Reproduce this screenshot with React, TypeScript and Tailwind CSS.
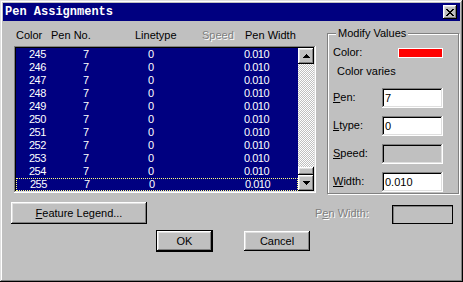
import React from "react";

const raised =
  "shadow-[inset_-1px_-1px_#000000,inset_1px_1px_#ffffff,inset_-2px_-2px_#808080,inset_2px_2px_#dfdfdf]";
const sunken =
  "shadow-[inset_-1px_-1px_#ffffff,inset_1px_1px_#808080,inset_-2px_-2px_#dfdfdf,inset_2px_2px_#000000]";

const rows = [245, 246, 247, 248, 249, 250, 251, 252, 253, 254, 255];

function UpArrow() {
  return (
    <svg width="7" height="4" viewBox="0 0 7 4">
      <path d="M3 0h1v1h1v1h1v1h1v1H0V3h1V2h1V1h1z" fill="#000" />
    </svg>
  );
}
function DownArrow() {
  return (
    <svg width="7" height="4" viewBox="0 0 7 4">
      <path d="M0 0h7v1H6v1H5v1H4v1H3V3H2V2H1V1H0z" fill="#000" />
    </svg>
  );
}

function Field({ value, disabled }: { value?: string; disabled?: boolean }) {
  return (
    <div
      className={`w-[61px] h-[20px] ${sunken} ${disabled ? "bg-[#c0c0c0]" : "bg-white"} flex items-center pl-[3px] text-[11px] text-black`}
    >
      {value}
    </div>
  );
}

export default function App() {
  return (
    <div
      className="w-[463px] h-[282px] bg-[#c0c0c0] p-[3px] shadow-[inset_-1px_-1px_#000000,inset_1px_1px_#dfdfdf,inset_-2px_-2px_#808080,inset_2px_2px_#ffffff] select-none"
      style={{ fontFamily: '"Liberation Sans", Arial, sans-serif' }}
    >
      {/* title bar */}
      <div className="h-[18px] bg-[#000080] flex items-center justify-between pl-[2px] pr-[3px]">
        <span
          className="text-white text-[12px] font-bold leading-none"
          style={{ fontFamily: '"Liberation Mono", "Courier New", monospace' }}
        >
          Pen Assignments
        </span>
        <div className={`w-[14px] h-[14px] bg-[#c0c0c0] ${raised} flex items-center justify-center`}>
          <svg width="8" height="7" viewBox="0 0 8 7">
            <path
              d="M0 0h2v1h1v1h2V1h1V0h2v1H7v1H6v1H5v1h1v1h1v1h1v1H6V6H5V5H3v1H2v1H0V6h1V5h1V4h1V3H2V2H1V1H0z"
              fill="#000"
            />
          </svg>
        </div>
      </div>

      {/* body */}
      <div className="flex flex-col text-[11px] leading-[13px] text-black">
        <div className="flex items-start">
          {/* left column */}
          <div className="ml-[11px] flex flex-col">
            <div className="relative h-[13px] mt-[8px] w-[302px]">
              <span className="absolute left-[2px] top-0">Color</span>
              <span className="absolute left-[37px] top-0">Pen No.</span>
              <span className="absolute left-[121px] top-0">Linetype</span>
              <span className="absolute left-[188px] top-0 text-[#808080] [text-shadow:1px_1px_0_#ffffff]">
                Speed
              </span>
              <span className="absolute left-[231px] top-0">Pen Width</span>
            </div>
            <div className={`mt-[4px] w-[302px] h-[147px] p-[2px] bg-[#c0c0c0] ${sunken} flex`}>
              <div className="w-[282px] h-[143px] bg-[#000080] flex flex-col text-white tracking-[-0.5px]">
                {rows.map((r, i) => (
                  <div
                    key={r}
                    className={`h-[13px] flex items-center pl-[13px] ${
                      i === rows.length - 1 ? "border border-dotted border-[#ffff7f] pl-[12px]" : ""
                    }`}
                  >
                    <span className="w-[54px]">{r}</span>
                    <span className="w-[65px]">7</span>
                    <span className="w-[96px]">0</span>
                    <span>0.010</span>
                  </div>
                ))}
              </div>
              {/* scrollbar */}
              <div className="w-[16px] h-[143px] flex flex-col bg-[repeating-conic-gradient(#c0c0c0_0%_25%,#ffffff_0%_50%)] bg-[length:2px_2px]">
                <div className={`w-[16px] h-[16px] bg-[#c0c0c0] ${raised} flex items-center justify-center`}>
                  <UpArrow />
                </div>
                <div className="flex-1" />
                <div className={`w-[16px] h-[8px] bg-[#c0c0c0] ${raised}`} />
                <div className={`w-[16px] h-[16px] bg-[#c0c0c0] ${raised} flex items-center justify-center`}>
                  <DownArrow />
                </div>
              </div>
            </div>
          </div>

          {/* group box */}
          <div className="relative ml-[11px] mt-[12px] w-[132px] h-[161px] border border-[#808080] shadow-[inset_1px_1px_#ffffff,1px_1px_#ffffff] flex flex-col pl-[5px]">
            <span className="absolute left-[8px] top-[-7px] bg-[#c0c0c0] px-[2px]">Modify Values</span>
            <div className="mt-[12px] h-[13px] flex items-center">
              <span className="w-[65px]">Color:</span>
              <div className="w-[45px] h-[10px] bg-[#ff0000] border border-[#ffffff]" />
            </div>
            <div className="mt-[6px] pl-[4px]">Color varies</div>
            <div className="mt-[10px] flex flex-col gap-[8px]">
              <div className="flex items-center h-[20px]">
                <span className="w-[49px] pb-[2px]">
                  <u>P</u>en:
                </span>
                <Field value="7" />
              </div>
              <div className="flex items-center h-[20px]">
                <span className="w-[49px] pb-[2px]">
                  <u>L</u>type:
                </span>
                <Field value="0" />
              </div>
              <div className="flex items-center h-[20px]">
                <span className="w-[49px] pb-[2px]">
                  <u>S</u>peed:
                </span>
                <Field disabled />
              </div>
              <div className="flex items-center h-[20px]">
                <span className="w-[49px] pb-[2px]">
                  <u>W</u>idth:
                </span>
                <Field value="0.010" />
              </div>
            </div>
          </div>
        </div>

        {/* feature legend row */}
        <div className="mt-[8px] flex items-center">
          <div className={`ml-[8px] w-[136px] h-[22px] ${raised} flex items-center justify-center`}>
            <span>
              <u>F</u>eature Legend...
            </span>
          </div>
          <span className="ml-[168px] w-[77px] text-[#808080] [text-shadow:1px_1px_0_#ffffff]">
            P<u>e</u>n Width:
          </span>
          <div className="w-[61px] h-[19px] mt-[2px] border border-[#000000] shadow-[inset_1px_1px_#808080]" />
        </div>

        {/* ok / cancel */}
        <div className="mt-[6px] flex items-start">
          <div className={`ml-[153px] w-[57px] h-[22px] border border-black ${raised} flex items-center justify-center`}>
            OK
          </div>
          <div className={`ml-[31px] mt-[1px] w-[66px] h-[20px] ${raised} flex items-center justify-center`}>
            Cancel
          </div>
        </div>
      </div>
    </div>
  );
}
